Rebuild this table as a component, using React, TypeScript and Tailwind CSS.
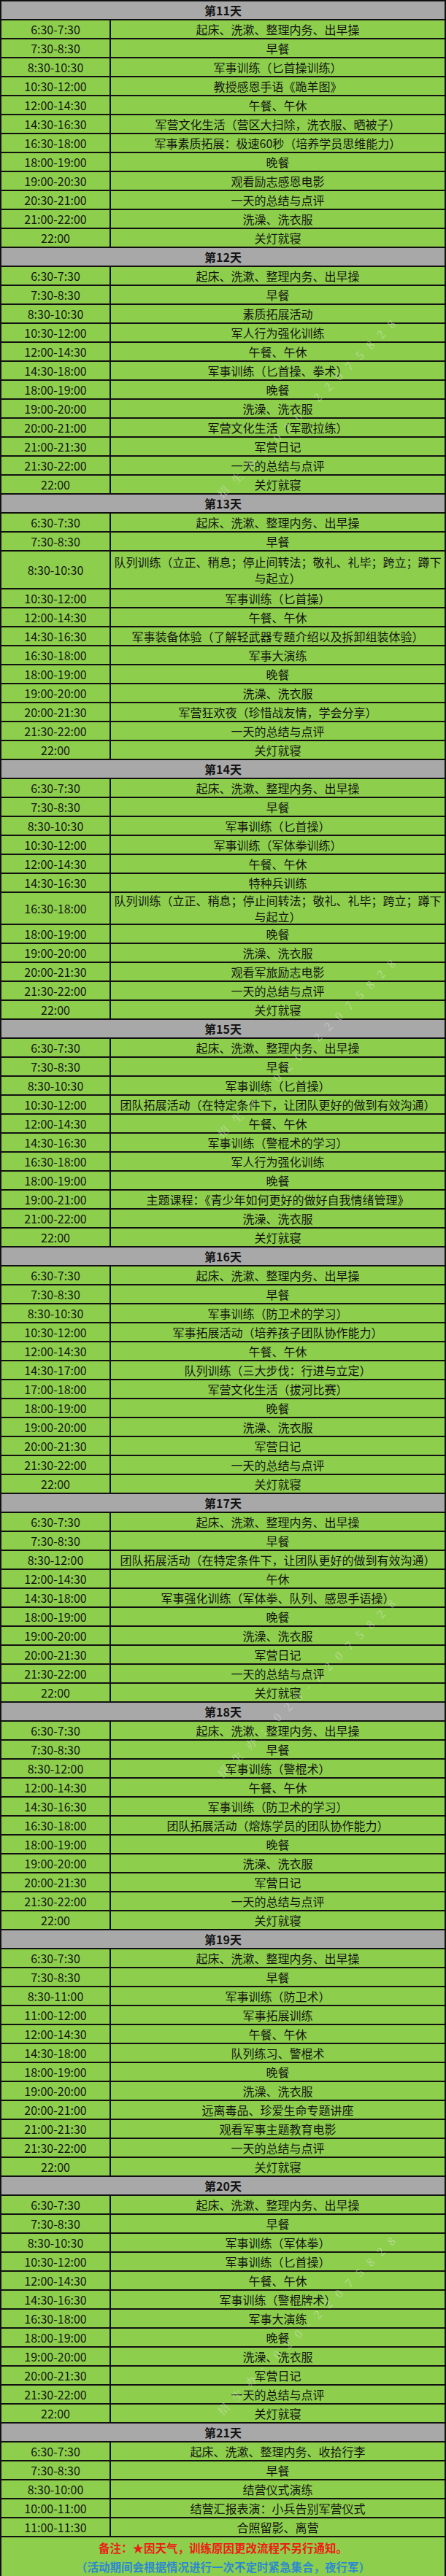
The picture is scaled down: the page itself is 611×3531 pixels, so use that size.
import React from "react";

type Row = { t: string; a: string | string[]; h?: number };
type Day = { title: string; rows: Row[] };

const R = (t: string, a: string | string[], h?: number): Row => ({ t, a, h });

const DRILL = ["队列训练（立正、稍息；停止间转法；敬礼、礼毕；跨立；蹲下", "与起立）"];

const days: Day[] = [
  {
    title: "第11天",
    rows: [
      R("6:30-7:30", "起床、洗漱、整理内务、出早操"),
      R("7:30-8:30", "早餐"),
      R("8:30-10:30", "军事训练（匕首操训练）"),
      R("10:30-12:00", "教授感恩手语《跪羊图》"),
      R("12:00-14:30", "午餐、午休"),
      R("14:30-16:30", "军营文化生活（营区大扫除，洗衣服、晒被子）"),
      R("16:30-18:00", "军事素质拓展：极速60秒（培养学员思维能力）"),
      R("18:00-19:00", "晚餐"),
      R("19:00-20:30", "观看励志感恩电影"),
      R("20:30-21:00", "一天的总结与点评"),
      R("21:00-22:00", "洗澡、洗衣服"),
      R("22:00", "关灯就寝"),
    ],
  },
  {
    title: "第12天",
    rows: [
      R("6:30-7:30", "起床、洗漱、整理内务、出早操"),
      R("7:30-8:30", "早餐"),
      R("8:30-10:30", "素质拓展活动"),
      R("10:30-12:00", "军人行为强化训练"),
      R("12:00-14:30", "午餐、午休"),
      R("14:30-18:00", "军事训练（匕首操、拳术）"),
      R("18:00-19:00", "晚餐"),
      R("19:00-20:00", "洗澡、洗衣服"),
      R("20:00-21:00", "军营文化生活（军歌拉练）"),
      R("21:00-21:30", "军营日记"),
      R("21:30-22:00", "一天的总结与点评"),
      R("22:00", "关灯就寝"),
    ],
  },
  {
    title: "第13天",
    rows: [
      R("6:30-7:30", "起床、洗漱、整理内务、出早操"),
      R("7:30-8:30", "早餐"),
      R("8:30-10:30", DRILL, 52),
      R("10:30-12:00", "军事训练（匕首操）"),
      R("12:00-14:30", "午餐、午休"),
      R("14:30-16:30", "军事装备体验（了解轻武器专题介绍以及拆卸组装体验）"),
      R("16:30-18:00", "军事大演练"),
      R("18:00-19:00", "晚餐"),
      R("19:00-20:00", "洗澡、洗衣服"),
      R("20:00-21:30", "军营狂欢夜（珍惜战友情，学会分享）"),
      R("21:30-22:00", "一天的总结与点评"),
      R("22:00", "关灯就寝"),
    ],
  },
  {
    title: "第14天",
    rows: [
      R("6:30-7:30", "起床、洗漱、整理内务、出早操"),
      R("7:30-8:30", "早餐"),
      R("8:30-10:30", "军事训练（匕首操）"),
      R("10:30-12:00", "军事训练（军体拳训练）"),
      R("12:00-14:30", "午餐、午休"),
      R("14:30-16:30", "特种兵训练"),
      R("16:30-18:00", DRILL, 44),
      R("18:00-19:00", "晚餐"),
      R("19:00-20:00", "洗澡、洗衣服"),
      R("20:00-21:30", "观看军旅励志电影"),
      R("21:30-22:00", "一天的总结与点评"),
      R("22:00", "关灯就寝"),
    ],
  },
  {
    title: "第15天",
    rows: [
      R("6:30-7:30", "起床、洗漱、整理内务、出早操"),
      R("7:30-8:30", "早餐"),
      R("8:30-10:30", "军事训练（匕首操）"),
      R("10:30-12:00", "团队拓展活动（在特定条件下，让团队更好的做到有效沟通）"),
      R("12:00-14:30", "午餐、午休"),
      R("14:30-16:30", "军事训练（警棍术的学习）"),
      R("16:30-18:00", "军人行为强化训练"),
      R("18:00-19:00", "晚餐"),
      R("19:00-21:00", "主题课程：《青少年如何更好的做好自我情绪管理》"),
      R("21:00-22:00", "洗澡、洗衣服"),
      R("22:00", "关灯就寝"),
    ],
  },
  {
    title: "第16天",
    rows: [
      R("6:30-7:30", "起床、洗漱、整理内务、出早操"),
      R("7:30-8:30", "早餐"),
      R("8:30-10:30", "军事训练（防卫术的学习）"),
      R("10:30-12:00", "军事拓展活动（培养孩子团队协作能力）"),
      R("12:00-14:30", "午餐、午休"),
      R("14:30-17:00", "队列训练（三大步伐：行进与立定）"),
      R("17:00-18:00", "军营文化生活（拔河比赛）"),
      R("18:00-19:00", "晚餐"),
      R("19:00-20:00", "洗澡、洗衣服"),
      R("20:00-21:30", "军营日记"),
      R("21:30-22:00", "一天的总结与点评"),
      R("22:00", "关灯就寝"),
    ],
  },
  {
    title: "第17天",
    rows: [
      R("6:30-7:30", "起床、洗漱、整理内务、出早操"),
      R("7:30-8:30", "早餐"),
      R("8:30-12:00", "团队拓展活动（在特定条件下，让团队更好的做到有效沟通）"),
      R("12:00-14:30", "午休"),
      R("14:30-18:00", "军事强化训练（军体拳、队列、感恩手语操）"),
      R("18:00-19:00", "晚餐"),
      R("19:00-20:00", "洗澡、洗衣服"),
      R("20:00-21:30", "军营日记"),
      R("21:30-22:00", "一天的总结与点评"),
      R("22:00", "关灯就寝"),
    ],
  },
  {
    title: "第18天",
    rows: [
      R("6:30-7:30", "起床、洗漱、整理内务、出早操"),
      R("7:30-8:30", "早餐"),
      R("8:30-12:00", "军事训练（警棍术）"),
      R("12:00-14:30", "午餐、午休"),
      R("14:30-16:30", "军事训练（防卫术的学习）"),
      R("16:30-18:00", "团队拓展活动（熔炼学员的团队协作能力）"),
      R("18:00-19:00", "晚餐"),
      R("19:00-20:00", "洗澡、洗衣服"),
      R("20:00-21:30", "军营日记"),
      R("21:30-22:00", "一天的总结与点评"),
      R("22:00", "关灯就寝"),
    ],
  },
  {
    title: "第19天",
    rows: [
      R("6:30-7:30", "起床、洗漱、整理内务、出早操"),
      R("7:30-8:30", "早餐"),
      R("8:30-11:00", "军事训练（防卫术）"),
      R("11:00-12:00", "军事拓展训练"),
      R("12:00-14:30", "午餐、午休"),
      R("14:30-18:00", "队列练习、警棍术"),
      R("18:00-19:00", "晚餐"),
      R("19:00-20:00", "洗澡、洗衣服"),
      R("20:00-21:00", "远离毒品、珍爱生命专题讲座"),
      R("21:00-21:30", "观看军事主题教育电影"),
      R("21:30-22:00", "一天的总结与点评"),
      R("22:00", "关灯就寝"),
    ],
  },
  {
    title: "第20天",
    rows: [
      R("6:30-7:30", "起床、洗漱、整理内务、出早操"),
      R("7:30-8:30", "早餐"),
      R("8:30-10:30", "军事训练（军体拳）"),
      R("10:30-12:00", "军事训练（匕首操）"),
      R("12:00-14:30", "午餐、午休"),
      R("14:30-16:30", "军事训练（警棍牌术）"),
      R("16:30-18:00", "军事大演练"),
      R("18:00-19:00", "晚餐"),
      R("19:00-20:00", "洗澡、洗衣服"),
      R("20:00-21:30", "军营日记"),
      R("21:30-22:00", "一天的总结与点评"),
      R("22:00", "关灯就寝"),
    ],
  },
  {
    title: "第21天",
    rows: [
      R("6:30-7:30", "起床、洗漱、整理内务、收拾行李"),
      R("7:30-8:30", "早餐"),
      R("8:30-10:00", "结营仪式演练"),
      R("10:00-11:00", "结营汇报表演：小兵告别军营仪式"),
      R("11:00-11:30", "合照留影、离营"),
    ],
  },
];

function TableRow({ row }: { row: Row }) {
  const lines = Array.isArray(row.a) ? row.a : [row.a];
  return (
    <div
      className="flex border-b-2 border-[#111] bg-[#8dcf4c]"
      style={{ height: row.h ?? 26 }}
    >
      <div className="flex w-[150px] shrink-0 items-center justify-center border-r-2 border-[#111] text-[16px] leading-[22px]">
        {row.t}
      </div>
      <div className="flex flex-1 flex-col items-center justify-center px-0.5 text-center text-[16px] leading-[22px] whitespace-nowrap">
        {lines.map((l, i) => (
          <span key={i}>{l}</span>
        ))}
      </div>
    </div>
  );
}

function Watermark({ cls }: { cls: string }) {
  return (
    <div
      className={`pointer-events-none absolute left-[424px] -translate-x-1/2 -translate-y-1/2 -rotate-45 whitespace-nowrap text-[15px] tracking-[12px] text-[#e6e6e6] opacity-50 ${cls}`}
      style={{ fontFamily: '"Noto Serif CJK SC", "Noto Sans CJK SC", serif' }}
    >
      招生办：020-22075828
    </div>
  );
}

export default function App() {
  return (
    <div
      className="relative w-[611px] overflow-hidden bg-[#8dcf4c] text-[#141414]"
      style={{ fontFamily: '"Noto Sans CJK SC", "Noto Sans", sans-serif' }}
    >
      <div className="border-x-2 border-t-2 border-[#111]">
        {days.map((d) => (
          <div key={d.title}>
            <div className="flex h-[26px] items-center justify-center border-b-2 border-[#111] bg-[#a8a8a8] text-[16px] font-bold">
              {d.title}
            </div>
            {d.rows.map((r, i) => (
              <TableRow key={i} row={r} />
            ))}
          </div>
        ))}
        <div className="flex h-[53px] flex-col items-center justify-center text-[15.5px] font-bold leading-[26px]">
          <span className="text-[#ee1c17]">备注：★因天气，训练原因更改流程不另行通知。</span>
          <span className="text-[#2b8ad0]">（活动期间会根据情况进行一次不定时紧急集合，夜行军）</span>
        </div>
      </div>
      <Watermark cls="top-[556px]" />
      <Watermark cls="top-[1433px]" />
      <Watermark cls="top-[2310px]" />
      <Watermark cls="top-[3184px]" />
    </div>
  );
}
